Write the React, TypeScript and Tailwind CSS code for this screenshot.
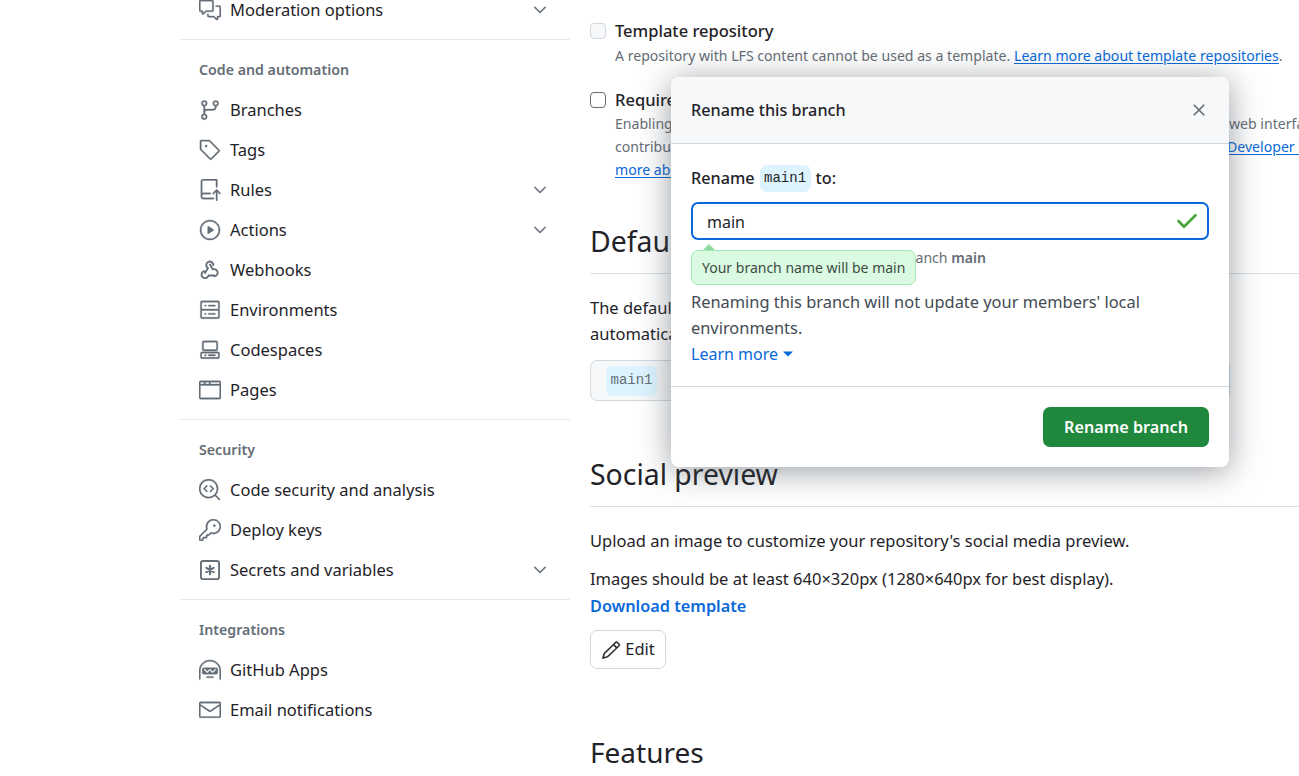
import React from 'react'
import {
  GoBrowser,
  GoCheck,
  GoChevronDown,
  GoCodescan,
  GoCodespaces,
  GoCommentDiscussion,
  GoGitBranch,
  GoHubot,
  GoKey,
  GoMail,
  GoPencil,
  GoPlay,
  GoRepoPush,
  GoServer,
  GoTag,
  GoTriangleDown,
  GoX,
} from 'react-icons/go'

type IconProps = { size?: number; className?: string; strokeWidth?: number }
type NavItem = { label: string; icon: React.ComponentType<IconProps>; chevron?: boolean }

const WebhookIcon = ({ size = 22, className }: IconProps) => (
  <svg width={size} height={size} viewBox="-0.8 -0.8 17.6 17.6" fill="none" stroke="currentColor" strokeWidth="1.5" strokeLinecap="round" className={className}>
    <path d="M10.7 4.1a2.85 2.85 0 1 0-4.4 2.4L4 10.4" />
    <path d="M8 3.6l2.3 3.9a2.85 2.85 0 1 1 1.3 5.5" />
    <path d="M3.3 8.9a2.85 2.85 0 1 0 3.5 3.5h4.6" />
  </svg>
)

const KeyAsteriskIcon = ({ size = 22, className }: IconProps) => (
  <svg width={size} height={size} viewBox="-0.8 -0.8 17.6 17.6" fill="none" stroke="currentColor" strokeWidth="1.5" strokeLinecap="round" className={className}>
    <rect x="0.75" y="0.75" width="14.5" height="14.5" rx="1.75" />
    <path d="M8 4.6v6.8M5.1 6.3l5.8 3.4M10.9 6.3 5.1 9.7" strokeWidth="1.7" />
  </svg>
)

const NavRow = ({ label, icon: Icon, chevron }: NavItem) => (
  <div className="flex h-10 w-[380px] items-center pl-5 pr-[10px] text-[#1f2328]">
    <Icon size={22} strokeWidth={0.4} className="-mx-px shrink-0 text-[#656d76]" />
    <span className="ml-[10px] flex-1 whitespace-nowrap">{label}</span>
    {chevron && <GoChevronDown size={20} strokeWidth={0.3} className="text-[#656d76]" />}
  </div>
)

const NavGroup = ({ title, items }: { title: string; items: NavItem[] }) => (
  <div className="mt-[9px] border-t border-[#e6eaef] pt-[10px]">
    <div className="flex h-10 items-center pl-[19px] text-[14.2px] font-semibold text-[#656d76]">{title}</div>
    {items.map((item) => (
      <NavRow key={item.label} {...item} />
    ))}
  </div>
)

const Sidebar = () => (
  <aside className="ml-[180px] w-[390px] shrink-0">
    <NavRow label="Moderation options" icon={GoCommentDiscussion} chevron />
    <NavGroup
      title="Code and automation"
      items={[
        { label: 'Branches', icon: GoGitBranch },
        { label: 'Tags', icon: GoTag },
        { label: 'Rules', icon: GoRepoPush, chevron: true },
        { label: 'Actions', icon: GoPlay, chevron: true },
        { label: 'Webhooks', icon: WebhookIcon },
        { label: 'Environments', icon: GoServer },
        { label: 'Codespaces', icon: GoCodespaces },
        { label: 'Pages', icon: GoBrowser },
      ]}
    />
    <NavGroup
      title="Security"
      items={[
        { label: 'Code security and analysis', icon: GoCodescan },
        { label: 'Deploy keys', icon: GoKey },
        { label: 'Secrets and variables', icon: KeyAsteriskIcon, chevron: true },
      ]}
    />
    <NavGroup
      title="Integrations"
      items={[
        { label: 'GitHub Apps', icon: GoHubot },
        { label: 'Email notifications', icon: GoMail },
      ]}
    />
  </aside>
)

const Main = () => (
  <main className="ml-5 w-[900px] shrink-0 pt-[19px] text-[#1f2328]">
    <div className="flex h-6 items-center">
      <span className="h-4 w-4 rounded-[4px] border border-[#d0d7de] bg-[#f6f8fa]" />
      <span className="ml-[9px] font-medium">Template repository</span>
    </div>
    <p className="mt-px ml-[25px] h-[23px] whitespace-nowrap text-[14.1px] leading-[23px] text-[#656d76]">
      A repository with LFS content cannot be used as a template.{' '}
      <a className="text-[#0969da] underline underline-offset-2">Learn more about template repositories</a>.
    </p>

    <div className="mt-[21px] flex h-6 items-center">
      <span className="h-4 w-4 rounded-[4px] border-[1.5px] border-[#656d76] bg-white" />
      <span className="ml-[9px] font-medium">Require contributors</span>
    </div>
    <div className="ml-[25px] text-[14.1px] leading-[23px] text-[#656d76]">
      <div className="flex h-[23px] whitespace-nowrap">
        <span className="w-[614px]">Enabling this setting</span>
        <span>web interface.</span>
      </div>
      <div className="flex h-[23px] whitespace-nowrap">
        <span className="w-[612px]">contributors</span>
        <a className="text-[#0969da] underline underline-offset-2">Developer Certificate</a>
      </div>
      <a className="block h-[23px] text-[#0969da] underline underline-offset-2">more about</a>
    </div>

    <h2 className="mt-10 h-[53px] border-b border-[#d8dee4] text-[28.4px] leading-10">Default branch</h2>
    <p className="mt-[21px] whitespace-nowrap leading-[26px]">The default branch</p>
    <p className="whitespace-nowrap leading-[26px]">automatically</p>
    <div className="mt-[13px] flex h-[41px] w-[640px] items-center rounded-[7px] border border-[#d0d7de] bg-[#f6f8fa] pl-[15px]">
      <span className="flex h-[30px] w-[51px] items-center justify-center rounded-[7px] bg-[#ddf4ff] font-['Liberation_Mono',monospace] text-[14px] text-[#656d76]">
        main1
      </span>
    </div>

    <h2 className="mt-[53px] h-[53px] border-b border-[#d8dee4] text-[28.4px] leading-10">Social preview</h2>
    <p className="mt-[21px] leading-[26px]">Upload an image to customize your repository's social media preview.</p>
    <p className="mt-3 leading-[26px]">Images should be at least 640×320px (1280×640px for best display).</p>
    <a className="mt-px block text-[16.3px] leading-[26px] font-semibold text-[#0969da]">Download template</a>
    <button className="mt-[11px] flex h-[39px] w-[76px] items-center justify-center gap-1 rounded-[7px] border border-[#d0d7de] bg-white">
      <GoPencil size={20} strokeWidth={0.4} />
      Edit
    </button>
    <h2 className="mt-[63px] text-[28px] leading-10">Features</h2>
  </main>
)

const RenameDialog = () => (
  <div className="absolute left-[671px] top-[77px] flex h-[390px] w-[558px] flex-col rounded-[8px] bg-white text-[#1f2328] shadow-[0_4px_32px_rgba(66,74,83,0.55)]">
    <div className="flex h-[67px] items-center justify-between rounded-t-[8px] border-b border-[#d0d7de] bg-[#f6f8fa] pl-5 pr-[20px]">
      <span className="text-[16.2px] font-medium">Rename this branch</span>
      <GoX size={20} strokeWidth={0.4} className="text-[#656d76]" />
    </div>
    <div className="relative flex-1 px-5 text-[16.4px]">
      <div className="mt-[19px] flex h-[30px] items-center text-[16.2px] font-medium">
        Rename
        <span className="mx-[5px] flex h-[27px] w-[51px] items-center justify-center rounded-[7px] bg-[#ddf4ff] font-['Liberation_Mono',monospace] text-[14px] font-normal">
          main1
        </span>
        to:
      </div>
      <div className="mt-[9px] flex h-[38px] items-center justify-between rounded-[7px] border-2 border-[#0969da] pl-[14px] pr-[8px]">
        <span className="pt-px text-[16px]">main</span>
        <GoCheck size={24} strokeWidth={1.2} className="text-[#4aa63c]" />
      </div>
      <div className="mt-[6px] flex h-[23px] w-[295px] justify-end whitespace-nowrap text-[14.1px] leading-[23px] text-[#656d76]">
        <span>
          anch <b className="font-semibold">main</b>
        </span>
      </div>
      <div className="absolute left-5 top-[106px] flex h-[35px] w-[225px] items-center rounded-[7px] border border-[#a6e9b8] bg-[#dafbe1] pl-[10px] text-[14px] whitespace-nowrap text-[#3f4a45]">
        Your branch name will be main
        <span className="absolute left-[11px] -top-[7px] h-0 w-0 border-x-[6px] border-b-[6px] border-x-transparent border-b-[#8fdca5]" />
      </div>
      <p className="mt-[20px] leading-[26px] text-[#424a53]">
        Renaming this branch will not update your members' local
        <br />
        environments.
      </p>
      <a className="flex h-[26px] items-center text-[16px] text-[#0969da]">
        Learn more
        <GoTriangleDown size={18} className="ml-px" />
      </a>
    </div>
    <div className="flex h-[81px] items-center justify-end border-t border-[#d0d7de] pr-5">
      <button className="h-10 w-[166px] rounded-[7px] bg-[#1f883d] text-[16.2px] font-semibold text-white">Rename branch</button>
    </div>
  </div>
)

export default function App() {
  return (
    <div className="relative h-[776px] w-[1299px] overflow-hidden bg-white font-['Noto_Sans',sans-serif] text-[16.5px]">
      <div className="-mt-[10px] flex">
        <Sidebar />
        <div className="mt-[10px]">
          <Main />
        </div>
      </div>
      <RenameDialog />
    </div>
  )
}
